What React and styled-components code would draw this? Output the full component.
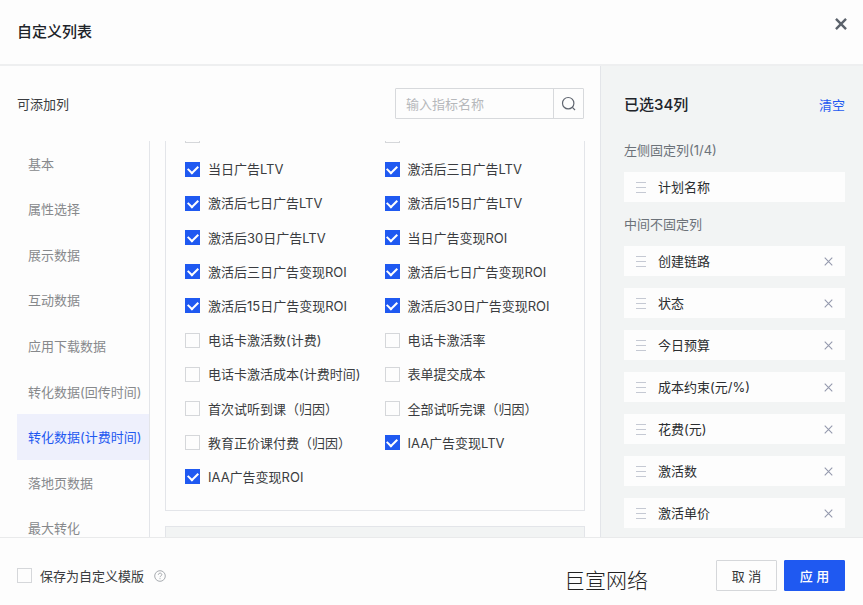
import React, { useState } from "react";
import styled, { createGlobalStyle } from "styled-components";

const blue = "#1f59f1";
const line = "#e3e5e9";
const surface = "#fdfdfd";
const muted = "#f2f4f4";

const GlobalStyle = createGlobalStyle`
  * { box-sizing: border-box; }
  body {
    margin: 0;
    background: ${surface};
    color: #3a3c40;
    font: 13px/20px Inter, "Noto Sans CJK SC", sans-serif;
  }
  button, input { font: inherit; }
  h1, h2, h3, ul { margin: 0; padding: 0; }
  ul { list-style: none; }
`;

const Dialog = styled.main`
  display: flex;
  flex-direction: column;
  height: 100vh;
`;

const Header = styled.header`
  display: flex;
  flex: none;
  justify-content: space-between;
  padding: 17px 15px 20px 17px;
  border-bottom: 2px solid #eeeff0;
`;

const Title = styled.h1`
  padding-top: 3px;
  font-size: 15px;
  line-height: 24px;
  font-weight: 500;
  color: #202329;
`;

const IconButton = styled.button`
  display: flex;
  align-items: center;
  justify-content: center;
  width: 14px;
  height: 14px;
  padding: 0;
  border: 0;
  background: none;
  color: ${(p) => p.$color};
  cursor: pointer;
`;

const Body = styled.div`
  display: flex;
  flex: 1;
  min-height: 0;
`;

const Available = styled.section`
  display: flex;
  flex: 1;
  flex-direction: column;
  min-width: 0;
  padding: 22px 15px 0 17px;
`;

const AvailableHead = styled.div`
  display: flex;
  flex: none;
  align-items: center;
  justify-content: space-between;
  margin: 0 1px 22px 0;
`;

const SectionTitle = styled.h2`
  font-size: 13px;
  line-height: 20px;
  font-weight: 400;
`;

const Search = styled.form`
  display: flex;
  width: 189px;
  height: 31px;
  border: 1px solid #d7d9dc;
  border-radius: 1px;
`;

const SearchInput = styled.input`
  flex: 1;
  min-width: 0;
  padding: 0 10px;
  border: 0;
  outline: 0;
  background: none;
  &::placeholder { color: #b6b8bb; opacity: 1; }
`;

const SearchButton = styled.button`
  display: flex;
  align-items: center;
  justify-content: center;
  width: 30px;
  padding: 0;
  border: 0;
  border-left: 1px solid #d7d9dc;
  background: none;
  color: #606670;
`;

const Columns = styled.div`
  display: flex;
  flex: 1;
  gap: 15px;
  min-height: 0;
`;

const Nav = styled.nav`
  flex: none;
  width: 133px;
  overflow: hidden;
  border-right: 1px solid ${line};
`;

const NavList = styled.ul`
  display: grid;
  grid-auto-rows: 1fr;
  height: 410px;
`;

const NavLink = styled.a`
  display: flex;
  align-items: center;
  height: 100%;
  padding-left: 11px;
  white-space: nowrap;
  text-decoration: none;
  color: ${(p) => (p.$active ? blue : "#87898c")};
  background: ${(p) => (p.$active ? "#eef0fc" : "transparent")};
`;

const Groups = styled.div`
  display: flex;
  flex: 1;
  flex-direction: column;
  gap: 15px;
  min-width: 0;
  overflow: hidden;
`;

const Group = styled.div`
  display: grid;
  flex: none;
  grid-template-columns: 1fr 1fr;
  grid-auto-rows: 1fr;
  height: 393px;
  margin-top: -23px;
  padding: 0 0 16px 19px;
  border: 1px solid ${line};
  border-top: 0;
`;

const NextGroup = styled.div`
  flex: none;
  height: 36px;
  border: 1px solid ${line};
  background: ${muted};
`;

const CheckLabel = styled.label`
  display: flex;
  align-items: center;
  gap: 8px;
  white-space: nowrap;
`;

const Checkbox = styled.input.attrs({ type: "checkbox" })`
  appearance: none;
  display: grid;
  place-content: center;
  flex: none;
  width: 15px;
  height: 15px;
  margin: 0;
  border: 1px solid #d5d7da;
  background: ${surface};
  &:checked {
    border-color: ${blue};
    background: ${blue};
  }
  &:checked::before {
    content: "";
    width: 8px;
    height: 5px;
    border: solid #fff;
    border-width: 0 0 2px 2px;
    transform: translateY(-1px) rotate(-45deg);
  }
`;

const Selected = styled.aside`
  flex: none;
  width: 263px;
  padding: 28px 18px 0 23px;
  overflow: hidden;
  border-left: 1px solid ${line};
  background: ${muted};
`;

const SelectedHead = styled.div`
  display: flex;
  align-items: center;
  justify-content: space-between;
  margin-bottom: 24px;
`;

const SelectedTitle = styled.h2`
  font-size: 15px;
  line-height: 22px;
  font-weight: 500;
  color: #202329;
`;

const ClearButton = styled.button`
  padding: 0;
  border: 0;
  background: none;
  color: ${blue};
  cursor: pointer;
`;

const GroupTitle = styled.h3`
  margin-bottom: 12px;
  font-size: 13px;
  line-height: 20px;
  font-weight: 400;
  color: #6c7279;
`;

const SelectedList = styled.ul`
  display: flex;
  flex-direction: column;
  gap: 12px;
  margin-bottom: 12px;
`;

const SelectedItem = styled.li`
  display: flex;
  align-items: center;
  gap: 12px;
  height: 30px;
  padding: 0 10px 0 12px;
  background: ${surface};
  color: #2b2d30;
`;

const ItemName = styled.span`
  flex: 1;
`;

const Footer = styled.footer`
  display: flex;
  flex: none;
  align-items: center;
  height: 68px;
  padding: 8px 18px 0 17px;
  border-top: 1px solid #e9eaeb;
`;

const HelpIcon = styled.svg`
  margin-left: 10px;
`;

const Watermark = styled.span`
  margin: 10px 68px 0 auto;
  font-size: 21px;
  line-height: 28px;
  font-weight: 300;
  color: #222;
`;

const Actions = styled.div`
  display: flex;
  gap: 7px;
`;

const ActionButton = styled.button`
  width: 61px;
  height: 31px;
  padding: 0;
  border: 1px solid ${(p) => (p.$primary ? blue : "#d5d7da")};
  border-radius: 1px;
  background: ${(p) => (p.$primary ? blue : surface)};
  color: ${(p) => (p.$primary ? "#fff" : "#333538")};
  font-weight: ${(p) => (p.$primary ? 500 : 400)};
`;

const categories = [
  "基本", "属性选择", "展示数据", "互动数据", "应用下载数据",
  "转化数据(回传时间)", "转化数据(计费时间)", "落地页数据", "最大转化",
];

const metrics = [
  ["当日广告LTV", true], ["激活后三日广告LTV", true],
  ["激活后七日广告LTV", true], ["激活后15日广告LTV", true],
  ["激活后30日广告LTV", true], ["当日广告变现ROI", true],
  ["激活后三日广告变现ROI", true], ["激活后七日广告变现ROI", true],
  ["激活后15日广告变现ROI", true], ["激活后30日广告变现ROI", true],
  ["电话卡激活数(计费)", false], ["电话卡激活率", false],
  ["电话卡激活成本(计费时间)", false], ["表单提交成本", false],
  ["首次试听到课（归因）", false], ["全部试听完课（归因）", false],
  ["教育正价课付费（归因）", false], ["IAA广告变现LTV", true],
  ["IAA广告变现ROI", true],
];

const selectedColumns = ["创建链路", "状态", "今日预算", "成本约束(元/%)", "花费(元)", "激活数", "激活单价"];

const Cross = ({ size, weight }) => (
  <svg width={size} height={size} viewBox="0 0 10 10" fill="none" stroke="currentColor" strokeWidth={weight} aria-hidden="true">
    <path d="M.8.8l8.4 8.4M9.2.8L.8 9.2" />
  </svg>
);

const Grip = () => (
  <svg width="10" height="11" viewBox="0 0 10 11" stroke="#c5c9d3" aria-hidden="true">
    <path d="M0 .5h10M0 5.5h10M0 10.5h10" />
  </svg>
);

export default function App() {
  const [active, setActive] = useState(6);
  return (
    <>
      <GlobalStyle />
      <Dialog>
        <Header>
          <Title>自定义列表</Title>
          <IconButton type="button" aria-label="关闭" $color="#5b626b">
            <Cross size={12} weight={2} />
          </IconButton>
        </Header>
        <Body>
          <Available>
            <AvailableHead>
              <SectionTitle>可添加列</SectionTitle>
              <Search onSubmit={(e) => e.preventDefault()}>
                <SearchInput type="text" placeholder="输入指标名称" aria-label="输入指标名称" />
                <SearchButton type="submit" aria-label="搜索">
                  <svg width="15" height="15" viewBox="0 0 15 15" fill="none" stroke="currentColor" strokeWidth="1.2" aria-hidden="true">
                    <circle cx="7.2" cy="7.2" r="5.7" />
                    <path d="M11.4 11.4l2.6 2.6" />
                  </svg>
                </SearchButton>
              </Search>
            </AvailableHead>
            <Columns>
              <Nav>
                <NavList>
                  {categories.map((name, i) => (
                    <li key={name}>
                      <NavLink href={`#group-${i}`} $active={i === active} onClick={() => setActive(i)}>
                        {name}
                      </NavLink>
                    </li>
                  ))}
                </NavList>
              </Nav>
              <Groups>
                <Group>
                  <CheckLabel><Checkbox aria-label="指标一" /></CheckLabel>
                  <CheckLabel><Checkbox aria-label="指标二" /></CheckLabel>
                  {metrics.map(([name, checked]) => (
                    <CheckLabel key={name}>
                      <Checkbox defaultChecked={checked} />
                      {name}
                    </CheckLabel>
                  ))}
                </Group>
                <NextGroup />
              </Groups>
            </Columns>
          </Available>
          <Selected>
            <SelectedHead>
              <SelectedTitle>已选34列</SelectedTitle>
              <ClearButton type="button">清空</ClearButton>
            </SelectedHead>
            <GroupTitle>左侧固定列(1/4)</GroupTitle>
            <SelectedList>
              <SelectedItem>
                <Grip />
                <ItemName>计划名称</ItemName>
              </SelectedItem>
            </SelectedList>
            <GroupTitle>中间不固定列</GroupTitle>
            <SelectedList>
              {selectedColumns.map((name) => (
                <SelectedItem key={name}>
                  <Grip />
                  <ItemName>{name}</ItemName>
                  <IconButton type="button" aria-label={`移除${name}`} $color="#9499ad">
                    <Cross size={9} weight={1.2} />
                  </IconButton>
                </SelectedItem>
              ))}
            </SelectedList>
          </Selected>
        </Body>
        <Footer>
          <CheckLabel>
            <Checkbox />
            保存为自定义模版
          </CheckLabel>
          <HelpIcon width="12" height="12" viewBox="0 0 12 12" fill="none" stroke="#a7abb0" role="img" aria-label="帮助">
            <circle cx="6" cy="6" r="5.3" />
            <path d="M4.3 4.8C4.3 2.5 7.8 2.6 7.8 4.7C7.8 5.9 6 5.9 6 7.2M6 8.2v1" />
          </HelpIcon>
          <Watermark>巨宣网络</Watermark>
          <Actions>
            <ActionButton type="button">取 消</ActionButton>
            <ActionButton type="button" $primary>应 用</ActionButton>
          </Actions>
        </Footer>
      </Dialog>
    </>
  );
}
